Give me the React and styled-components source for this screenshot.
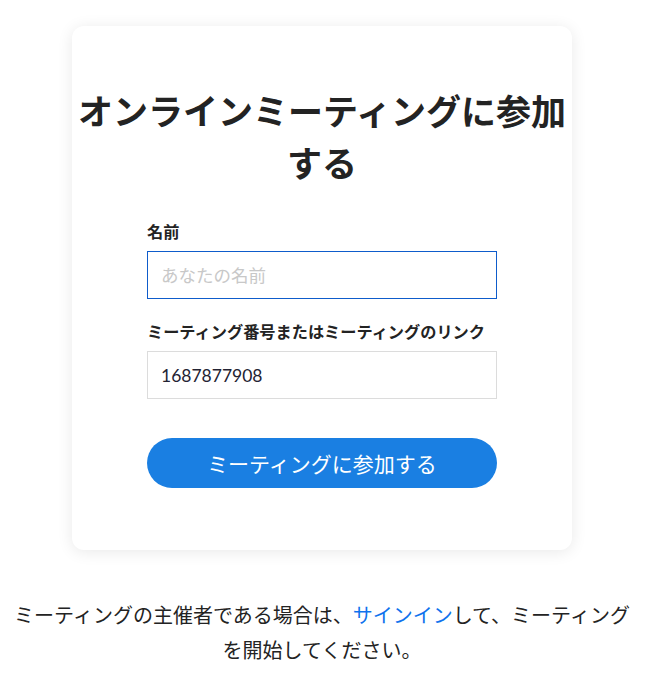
import React from "react";
import styled, { createGlobalStyle } from "styled-components";

const Global = createGlobalStyle`
  html, body { margin: 0; padding: 0; background: #fff; }
  body { font-family: Lato, "Noto Sans CJK JP", sans-serif; color: #232333; }
`;

const Page = styled.div`
  width: 644px;
  padding-top: 26px;
  display: flex;
  flex-direction: column;
  align-items: center;
`;

const Card = styled.div`
  width: 500px;
  box-sizing: border-box;
  background: #fff;
  border-radius: 12px;
  box-shadow: 0 2px 16px rgba(0, 0, 0, 0.09);
  padding: 59px 6px 62px;
  display: flex;
  flex-direction: column;
  align-items: center;
`;

const Title = styled.h1`
  margin: 0 0 33px;
  font-family: Lato, "Noto Sans CJK JP", sans-serif;
  font-size: 35px;
  font-weight: 700;
  line-height: 52px;
  text-align: center;
  color: #232323;
`;

const Form = styled.form`
  width: 350px;
  display: flex;
  flex-direction: column;
`;

const Label = styled.label`
  font-size: 16.2px;
  font-weight: 700;
  line-height: 20px;
  color: #232323;
  margin-bottom: 9px;
`;

const Input = styled.input`
  box-sizing: border-box;
  width: 100%;
  height: 48px;
  padding: 0 14px 0 13px;
  font-family: Lato, "Noto Sans CJK JP", sans-serif;
  font-size: 17.5px;
  color: #232333;
  caret-color: #232333;
  border: 1px solid ${(p) => (p.$focused ? "#0e5ccb" : "#dcdcdc")};
  border-radius: 0;
  outline: none;
  margin-bottom: ${(p) => p.$mb}px;
  &::placeholder { color: #c8c8c8; }
`;

const Button = styled.button`
  height: 50px;
  border: none;
  border-radius: 25px;
  background: #1a7fe2;
  color: #fff;
  font-family: Lato, "Noto Sans CJK JP", sans-serif;
  font-size: 21px;
  cursor: pointer;
`;

const Footer = styled.p`
  box-sizing: border-box;
  width: 644px;
  padding: 0 8px;
  margin: 48px 0 0;
  font-size: 20px;
  line-height: 35px;
  text-align: center;
  color: #232323;
`;

const Link = styled.a`
  color: #0e72ed;
  text-decoration: none;
`;

export default function App() {
  return (
    <>
      <Global />
      <Page>
        <Card>
          <Title>オンラインミーティングに参加する</Title>
          <Form onSubmit={(e) => e.preventDefault()}>
            <Label>名前</Label>
            <Input $focused $mb={23} placeholder="あなたの名前" autoFocus />
            <Label>ミーティング番号またはミーティングのリンク</Label>
            <Input $mb={39} defaultValue="1687877908" />
            <Button type="submit">ミーティングに参加する</Button>
          </Form>
        </Card>
        <Footer>
          ミーティングの主催者である場合は、<Link href="#">サインイン</Link>して、ミーティングを開始してください。
        </Footer>
      </Page>
    </>
  );
}
